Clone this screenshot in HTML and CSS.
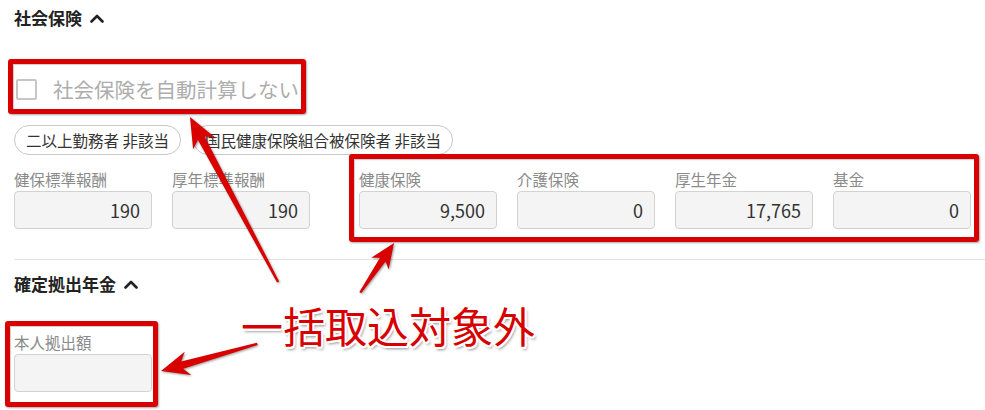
FILE: index.html
```html
<!DOCTYPE html>
<html lang="ja">
<head>
<meta charset="utf-8">
<title>社会保険</title>
<link rel="stylesheet" href="styles.css">
</head>
<body>
<div class="page">
  <section class="section">
    <h2 class="section-title">社会保険<svg class="chev" viewBox="0 0 14 9" width="14" height="9"><polyline points="1.5,7.5 7,2 12.5,7.5"/></svg></h2>
    <div class="check-row"><span class="checkbox"></span><span class="check-label">社会保険を自動計算しない</span></div>
    <div class="chips">
      <span class="chip">二以上勤務者 非該当</span>
      <span class="chip">国民健康保険組合被保険者 非該当</span>
    </div>
    <div class="fields">
      <div class="group">
        <div class="field"><div class="field-label">健保標準報酬</div><div class="field-input">190</div></div>
        <div class="field"><div class="field-label">厚年標準報酬</div><div class="field-input">190</div></div>
      </div>
      <div class="group group-premium">
        <div class="field"><div class="field-label">健康保険</div><div class="field-input">9,500</div></div>
        <div class="field"><div class="field-label">介護保険</div><div class="field-input">0</div></div>
        <div class="field"><div class="field-label">厚生年金</div><div class="field-input">17,765</div></div>
        <div class="field"><div class="field-label">基金</div><div class="field-input">0</div></div>
      </div>
    </div>
  </section>
  <hr class="divider">
  <section class="section">
    <h2 class="section-title section-title-2">確定拠出年金<svg class="chev" viewBox="0 0 14 9" width="14" height="9"><polyline points="1.5,7.5 7,2 12.5,7.5"/></svg></h2>
    <div class="fields fields-2">
      <div class="field"><div class="field-label">本人拠出額</div><div class="field-input"></div></div>
    </div>
  </section>
</div>

<div class="annot">
  <div class="mark mark-1"></div>
  <div class="mark mark-2"></div>
  <div class="mark mark-3"></div>
  <svg class="arrows" width="985" height="410" viewBox="0 0 985 410">
    <g transform="translate(190,117) rotate(61.9)">
      <polygon points="0,0 30,-12.5 24,-3.8 187,-1.2 187,1.2 24,3.8 30,12.5"/>
    </g>
    <g transform="translate(394,243) rotate(124.2)">
      <polygon points="0,0 25,-10.5 20,-3.4 60,-1.1 60,1.1 20,3.4 25,10.5"/>
    </g>
    <g transform="translate(161,371) rotate(-15.7)">
      <polygon points="0,0 28,-12 22,-3.8 100,-1.2 100,1.2 22,3.8 28,12"/>
    </g>
  </svg>
  <div class="callout">一括取込対象外</div>
</div>
</body>
</html>
```

FILE: styles.css
```css
* { box-sizing: border-box; }

html, body {
  margin: 0;
  padding: 0;
  background: #ffffff;
}

body {
  width: 985px;
  height: 410px;
  overflow: hidden;
  position: relative;
  font-family: "Noto Sans CJK JP", "Noto Sans", sans-serif;
  color: #333333;
}

.page {
  padding: 8px 0 0 14px;
}

.section-title {
  margin: 0;
  height: 20px;
  line-height: 20px;
  font-size: 17px;
  font-weight: 700;
  color: #222222;
  display: flex;
  align-items: center;
  gap: 8px;
}

.chev polyline {
  fill: none;
  stroke: #222222;
  stroke-width: 2.6;
  stroke-linecap: round;
  stroke-linejoin: round;
}

.check-row {
  margin-top: 43px;
  height: 36px;
  display: flex;
  align-items: center;
  gap: 16px;
  padding-left: 2px;
}

.checkbox {
  width: 21px;
  height: 21px;
  border: 2px solid #c6c6c6;
  border-radius: 2px;
  background: #ffffff;
  flex: none;
}

.check-label {
  font-size: 20.5px;
  color: #adadad;
  line-height: 1;
}

.chips {
  margin-top: 18px;
  display: flex;
  gap: 12px;
}

.chip {
  height: 30px;
  border: 1px solid #c8c8c8;
  border-radius: 15px;
  padding: 0 11px;
  font-size: 15.5px;
  line-height: 28px;
  color: #333333;
  white-space: nowrap;
}

.fields {
  margin-top: 14px;
  display: flex;
}

.group {
  display: flex;
  gap: 20px;
}

.group-premium {
  margin-left: 49px;
}

.field {
  width: 138px;
}

.field-label {
  height: 20px;
  line-height: 20px;
  font-size: 15.5px;
  color: #8a8a8a;
  white-space: nowrap;
}

.field-input {
  margin-top: 2px;
  height: 38px;
  border: 1px solid #d2d2d2;
  border-radius: 4px;
  background: #f4f4f4;
  text-align: right;
  padding-right: 11px;
  font-size: 18px;
  line-height: 36px;
  color: #333333;
}

.divider {
  margin: 30px 0 0 0;
  border: 0;
  border-top: 1px solid #e2e2e2;
  height: 0;
}

.section-title-2 {
  margin-top: 14px;
}

.fields-2 {
  margin-top: 38px;
}

/* annotation overlay */
.annot {
  position: absolute;
  left: 0;
  top: 0;
  width: 985px;
  height: 410px;
  pointer-events: none;
}

.mark {
  position: absolute;
  border: 5px solid #d90000;
  border-radius: 3px;
  box-shadow: 1px 1px 2px rgba(0, 0, 0, 0.35), inset 1px 1px 1px rgba(0, 0, 0, 0.2);
}

.mark-1 { left: 8px; top: 59px; width: 298px; height: 55px; }
.mark-2 { left: 349px; top: 154px; width: 630px; height: 88px; }
.mark-3 { left: 5px; top: 321px; width: 153px; height: 86px; }

.arrows {
  position: absolute;
  left: 0;
  top: 0;
  filter: drop-shadow(1px 1px 1px rgba(0, 0, 0, 0.4));
}

.arrows polygon {
  fill: #d90000;
}

.callout {
  position: absolute;
  left: 241px;
  top: 304px;
  font-size: 42px;
  line-height: 42px;
  font-weight: 400;
  color: #d60000;
  white-space: nowrap;
  text-shadow:
    -2px 0 0 #fff, 2px 0 0 #fff, 0 -2px 0 #fff, 0 2px 0 #fff,
    -1.5px -1.5px 0 #fff, 1.5px -1.5px 0 #fff, -1.5px 1.5px 0 #fff, 1.5px 1.5px 0 #fff,
    2px 3px 3px rgba(0, 0, 0, 0.45);
}
```
